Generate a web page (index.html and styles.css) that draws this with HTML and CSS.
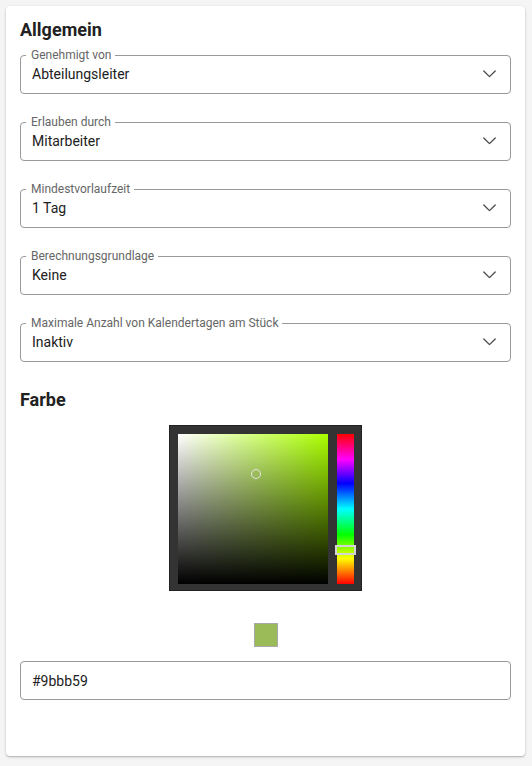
FILE: index.html
```html
<!DOCTYPE html>
<html lang="de">
<head>
<meta charset="utf-8">
<title>Allgemein</title>
<link rel="stylesheet" href="styles.css">
</head>
<body>
<div class="card">
  <h2 class="title">Allgemein</h2>
  <div class="fields">
    <fieldset class="field">
      <legend>Genehmigt von</legend>
      <div class="row"><span class="value">Abteilungsleiter</span><svg class="chev" width="13" height="8" viewBox="0 0 13 8"><polyline points="0.8,1 6.5,6.6 12.2,1"/></svg></div>
    </fieldset>
    <fieldset class="field">
      <legend>Erlauben durch</legend>
      <div class="row"><span class="value">Mitarbeiter</span><svg class="chev" width="13" height="8" viewBox="0 0 13 8"><polyline points="0.8,1 6.5,6.6 12.2,1"/></svg></div>
    </fieldset>
    <fieldset class="field">
      <legend>Mindestvorlaufzeit</legend>
      <div class="row"><span class="value">1 Tag</span><svg class="chev" width="13" height="8" viewBox="0 0 13 8"><polyline points="0.8,1 6.5,6.6 12.2,1"/></svg></div>
    </fieldset>
    <fieldset class="field">
      <legend>Berechnungsgrundlage</legend>
      <div class="row"><span class="value">Keine</span><svg class="chev" width="13" height="8" viewBox="0 0 13 8"><polyline points="0.8,1 6.5,6.6 12.2,1"/></svg></div>
    </fieldset>
    <fieldset class="field">
      <legend>Maximale Anzahl von Kalendertagen am Stück</legend>
      <div class="row"><span class="value">Inaktiv</span><svg class="chev" width="13" height="8" viewBox="0 0 13 8"><polyline points="0.8,1 6.5,6.6 12.2,1"/></svg></div>
    </fieldset>
  </div>
  <h2 class="title title-color">Farbe</h2>
  <div class="picker-wrap">
    <div class="picker">
      <div class="sat">
        <span class="sat-pointer"></span>
      </div>
      <div class="hue">
        <span class="hue-knob"></span>
      </div>
    </div>
  </div>
  <div class="swatch-wrap"><span class="swatch"></span></div>
  <div class="hex-input">#9bbb59</div>
</div>
</body>
</html>
```
FILE: styles.css
```css
* { box-sizing: border-box; }
html, body { margin: 0; padding: 0; }
body {
  background: #f5f5f5;
  font-family: Roboto, "Noto Sans", "Liberation Sans", sans-serif;
  color: #212121;
}
.card {
  margin: 6px 7px 10px 6px;
  width: 519px;
  height: 750px;
  background: #fff;
  border-radius: 4px;
  box-shadow: 0 1px 3px rgba(0,0,0,0.2), 0 1px 1px rgba(0,0,0,0.12);
  padding: 13px 14px 0 14px;
}
.title {
  margin: 0;
  font-size: 18px;
  line-height: 22px;
  font-weight: 700;
  color: #212121;
}
.fields {
  margin-top: 8px;
  display: flex;
  flex-direction: column;
  gap: 22px;
}
.field {
  margin: 0;
  min-width: 0;
  border: 1px solid #999;
  border-radius: 4px;
  padding: 4px 14px 11px 11px;
}
.field legend {
  margin-left: -6px;
  padding: 0 4px 0 5px;
  font-size: 12px;
  line-height: 13px;
  color: #666;
}
.row {
  display: flex;
  align-items: center;
  height: 16px;
}
.value {
  flex: 1;
  font-size: 14px;
  line-height: 16px;
  color: #212121;
}
.chev {
  display: block;
  width: 13px;
  height: 8px;
  margin-top: -1px;
}
.chev polyline {
  fill: none;
  stroke: #4a4a4a;
  stroke-width: 1.3;
  stroke-linecap: round;
  stroke-linejoin: round;
}
.title-color { margin-top: 27px; }
.picker-wrap {
  margin-top: 14px;
  display: flex;
  justify-content: center;
}
.picker {
  display: flex;
  gap: 9px;
  width: 193px;
  height: 166px;
  padding: 8px 7px 6px 8px;
  background: #333;
  border: 1px solid #222;
}
.sat {
  position: relative;
  width: 150px;
  height: 150px;
  background:
    linear-gradient(to top, #000, rgba(0,0,0,0)),
    linear-gradient(to right, #fff, #aaff00);
}
.sat-pointer {
  position: absolute;
  left: 73px;
  top: 35px;
  width: 10px;
  height: 10px;
  border: 1.5px solid #e6e6e6;
  border-radius: 50%;
}
.hue {
  position: relative;
  width: 17px;
  height: 150px;
  background: linear-gradient(to bottom, #ff0000 0%, #ff00ff 17%, #0000ff 33%, #00ffff 50%, #00ff00 67%, #ffff00 83%, #ff0000 100%);
}
.hue-knob {
  position: absolute;
  left: -2px;
  top: 111px;
  width: 21px;
  height: 10px;
  border: 2px solid #d4d4d4;
}
.swatch-wrap {
  margin-top: 32px;
  display: flex;
  justify-content: center;
}
.swatch {
  display: block;
  width: 24px;
  height: 24px;
  background: #9bbb59;
  border: 1px solid #aaa;
}
.hex-input {
  margin-top: 14px;
  height: 39px;
  border: 1px solid #999;
  border-radius: 4px;
  padding: 0 11px;
  display: flex;
  align-items: center;
  font-size: 14px;
  color: #212121;
}
```
